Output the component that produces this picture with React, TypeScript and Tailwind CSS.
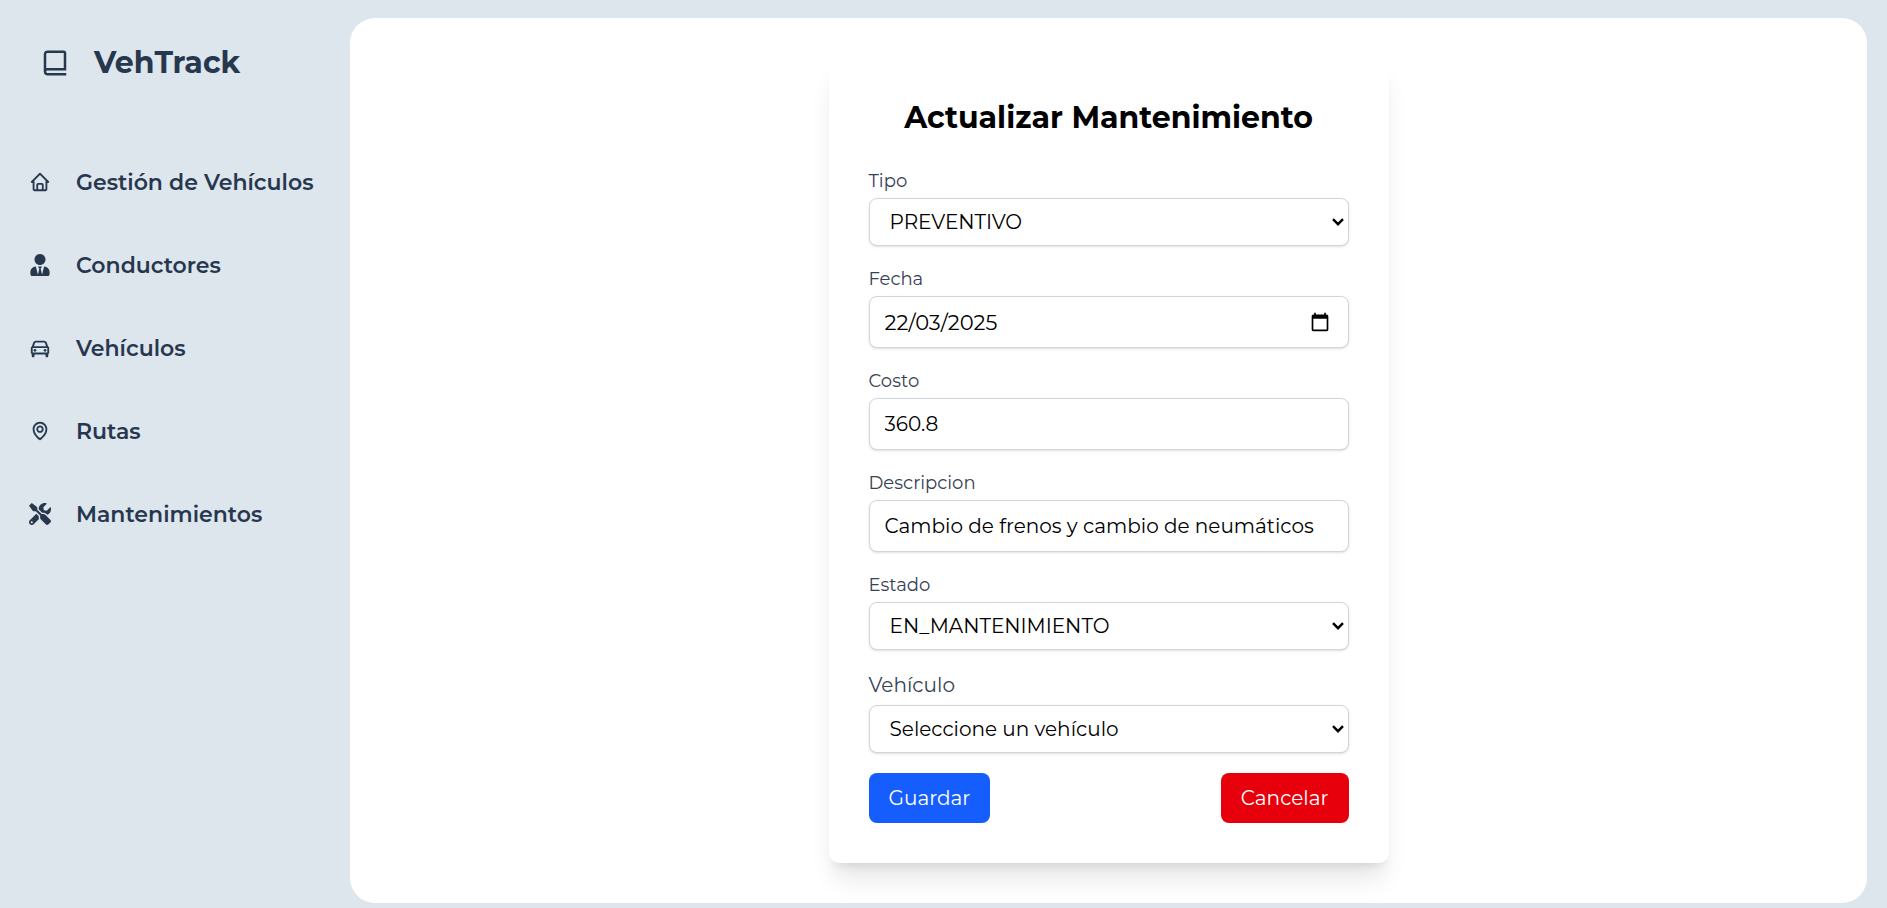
import { useState } from "react";
import type { ReactNode, SelectHTMLAttributes, InputHTMLAttributes } from "react";
import { BiHome, BiCar, BiMap } from "react-icons/bi";
import { FaUserTie, FaTools } from "react-icons/fa";

const links: { label: string; icon: ReactNode }[] = [
  { label: "Gestión de Vehículos", icon: <BiHome size={22} /> },
  { label: "Conductores", icon: <FaUserTie size={22} /> },
  { label: "Vehículos", icon: <BiCar size={22} /> },
  { label: "Rutas", icon: <BiMap size={22} /> },
  { label: "Mantenimientos", icon: <FaTools size={22} /> },
];

function BookIcon() {
  return (
    <svg width="30" height="30" viewBox="0 0 24 24" fill="currentColor" aria-hidden="true">
      <path
        fillRule="evenodd"
        d="M6 2h13a2 2 0 0 1 2 2v14H6.012C5.550 18.012 5 18.194 5 19s.55.988 1.012 1H21v2H6c-1.206 0-3-.799-3-3V5c0-2.201 1.794-3 3-3zm-1 14.200c.3-.1.650-.2 1-.2h13V4H6c-.450.012-1 .194-1 1z"
      />
    </svg>
  );
}

function Sidebar() {
  return (
    <aside className="w-[350px] shrink-0 text-[#27374d]">
      <div className="flex h-[125px] items-center gap-6 px-10">
        <BookIcon />
        <span className="text-[30px] leading-10 font-bold">VehTrack</span>
      </div>
      <nav className="mt-[37px] flex flex-col gap-[43px]">
        {links.map(({ label, icon }) => (
          <a key={label} href="#" className="flex h-10 items-center gap-6 pl-7 text-[22px] font-semibold">
            <span className="flex w-6 shrink-0 justify-center">{icon}</span>
            <span className="whitespace-nowrap">{label}</span>
          </a>
        ))}
      </nav>
    </aside>
  );
}

function Field({ id, label, large, children }: { id: string; label: string; large?: boolean; children: ReactNode }) {
  return (
    <div className="mb-5">
      <label
        htmlFor={id}
        className={large ? "block text-xl leading-[30px] text-gray-700" : "block text-lg leading-[26px] text-gray-700"}
      >
        {label}
      </label>
      <div className={large ? "relative mt-[5px]" : "relative mt-1"}>{children}</div>
    </div>
  );
}

function Select(props: SelectHTMLAttributes<HTMLSelectElement>) {
  return (
    <>
      <select
        {...props}
        className="block h-12 w-full appearance-none rounded-lg border border-gray-300 bg-white px-5 text-xl text-black shadow-sm"
      />
      <svg
        width="12"
        height="8"
        viewBox="0 0 12 8"
        fill="none"
        stroke="black"
        strokeWidth="2.4"
        aria-hidden="true"
        className="pointer-events-none absolute inset-y-0 right-[5px] my-auto"
      >
        <path d="M1 1.200l5 5 5-5" />
      </svg>
    </>
  );
}

function Input({ className = "text-xl", ...props }: InputHTMLAttributes<HTMLInputElement>) {
  return (
    <input
      {...props}
      className={`block h-[52px] w-full rounded-lg border border-gray-300 bg-white px-[15px] text-black shadow-sm ${className}`}
    />
  );
}

function CalendarIcon() {
  return (
    <svg width="20" height="20" viewBox="0 0 24 24" fill="currentColor" aria-hidden="true">
      <path d="M20 3h-1V1h-2v2H7V1H5v2H4c-1.100 0-2 .9-2 2v16c0 1.100.9 2 2 2h16c1.100 0 2-.9 2-2V5c0-1.100-.9-2-2-2zm0 18H4V8h16v13z" />
    </svg>
  );
}

function MaintenanceForm() {
  const [fecha, setFecha] = useState("22/03/2025");
  const [costo, setCosto] = useState("360.8");
  const [descripcion, setDescripcion] = useState("Cambio de frenos y cambio de neumáticos");

  return (
    <form className="w-full max-w-[560px] rounded-[10px] bg-white p-10 shadow-xl" onSubmit={(e) => e.preventDefault()}>
      <h1 className="mb-[30px] text-center text-[30px] leading-10 font-bold text-black">Actualizar Mantenimiento</h1>
      <Field id="tipo" label="Tipo">
        <Select id="tipo" defaultValue="PREVENTIVO">
          <option>PREVENTIVO</option>
          <option>CORRECTIVO</option>
        </Select>
      </Field>
      <Field id="fecha" label="Fecha">
        <Input id="fecha" className="text-[21px]" value={fecha} onChange={(e) => setFecha(e.target.value)} />
        <button type="button" aria-label="Abrir calendario" className="absolute inset-y-0 right-[19px] flex items-center text-black">
          <CalendarIcon />
        </button>
      </Field>
      <Field id="costo" label="Costo">
        <Input id="costo" value={costo} onChange={(e) => setCosto(e.target.value)} />
      </Field>
      <Field id="descripcion" label="Descripcion">
        <Input id="descripcion" value={descripcion} onChange={(e) => setDescripcion(e.target.value)} />
      </Field>
      <Field id="estado" label="Estado">
        <Select id="estado" defaultValue="EN_MANTENIMIENTO">
          <option>EN_MANTENIMIENTO</option>
          <option>COMPLETADO</option>
        </Select>
      </Field>
      <Field id="vehiculo" label="Vehículo" large>
        <Select id="vehiculo" defaultValue="">
          <option value="">Seleccione un vehículo</option>
        </Select>
      </Field>
      <div className="flex justify-between">
        <button type="submit" className="rounded-lg bg-blue-600 px-5 py-[10px] text-xl leading-[30px] text-white">
          Guardar
        </button>
        <button type="button" className="rounded-lg bg-red-600 px-5 py-[10px] text-xl leading-[30px] text-white">
          Cancelar
        </button>
      </div>
    </form>
  );
}

export default function App() {
  return (
    <div className="flex min-h-screen bg-[#dde6ed] font-['Montserrat','Inter',sans-serif]">
      <Sidebar />
      <main className="mt-[18px] mr-5 mb-[5px] flex flex-1 items-start justify-center rounded-[25px] bg-white p-10">
        <MaintenanceForm />
      </main>
    </div>
  );
}
